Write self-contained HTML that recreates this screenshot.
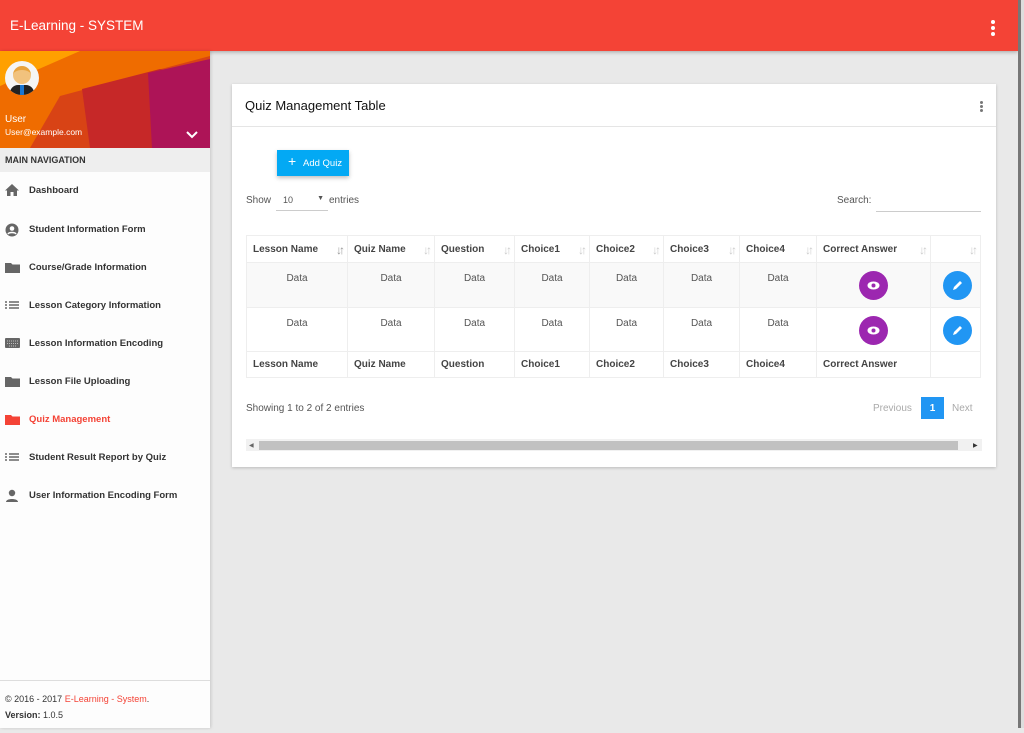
<!DOCTYPE html>
<html><head><meta charset="utf-8"><style>
*{box-sizing:border-box;margin:0;padding:0}
body{width:1024px;height:728px;overflow:hidden;background:#e9e9e9;font-family:"Liberation Sans",sans-serif;position:relative}
.hdr{position:absolute;left:0;top:0;width:1018px;height:51px;background:#f44336;box-shadow:0 1px 4px rgba(0,0,0,.3)}
.hdr .t{position:absolute;left:10px;top:18px;color:#fff;font-size:13.5px}
.dots{position:absolute;width:4px}
.dots i{display:block;width:4px;height:4px;border-radius:50%;background:#fff;margin-bottom:2px}
.rb{position:absolute;left:1018px;top:0;width:3px;height:728px;background:#777}
.rb2{position:absolute;left:1021px;top:0;width:3px;height:728px;background:#ddd}
.rb3{position:absolute;left:1018px;top:0;width:3px;height:51px;background:#c0392b}
.side{position:absolute;left:0;top:51px;width:210px;height:677px;background:#fdfdfd;box-shadow:1px 0 3px rgba(0,0,0,.15)}
.ban{height:97px;position:relative;overflow:hidden;background:#e65100}
.nav-l{height:24px;background:#eee;font-size:9px;font-weight:bold;color:#333;padding:7px 5px}
.it{position:absolute;left:0;height:20px;width:210px;font-size:9.5px;font-weight:bold;color:#333}
.it span{position:absolute;left:29px;top:5px}
.it svg{position:absolute;left:5px;top:4px}
.foot{position:absolute;left:0;top:629px;width:210px;border-top:1px solid #ddd;padding:10px 5px;font-size:9px;color:#333;line-height:16px}
.card{position:absolute;left:232px;top:84px;width:764px;height:383px;background:#fff;box-shadow:0 1px 3px rgba(0,0,0,.2)}
.card .ti{position:absolute;left:13px;top:14px;font-size:13px;color:#111}
.card .hl{position:absolute;left:0;top:42px;width:764px;border-top:1px solid #e5e5e5}
.btn{position:absolute;left:45px;top:66px;width:72px;height:26px;background:#03a9f4;color:#fff;font-size:9.5px;box-shadow:0 2px 4px rgba(0,0,0,.25);padding:8px 0 0 11px}
.sm{font-size:10px;color:#555;position:absolute}
table{position:absolute;left:14px;top:151px;border-collapse:collapse;font-size:10px;color:#555}
td,th{border:1px solid #eee;padding:0 6px;text-align:left}
th{height:27px;font-weight:bold;color:#444;position:relative}
th b{position:absolute;right:5px;top:7px;color:#ccc;font-size:12px;letter-spacing:-3px;font-weight:normal}
td.d{text-align:center;vertical-align:top;padding-top:10px}
tr.r1 td{background:#f9f9f9;height:45px}
tr.r2 td{height:44px}
tfoot td{height:26px;font-weight:bold;color:#444}
.c{width:29px;height:29px;border-radius:50%;display:inline-block;margin-top:-1px;position:relative}
</style></head><body>
<div class="hdr"><div class="t">E-Learning - SYSTEM</div><div class="dots" style="left:991px;top:20px"><i></i><i></i><i></i></div></div>
<div class="rb3"></div><div class="rb"></div><div class="rb2"></div>
<div class="side">
 <div class="ban">
  <svg width="210" height="97" style="position:absolute;left:0;top:0">
   <rect width="210" height="97" fill="#ef6c00"/>
   <polygon points="0,0 80,0 0,35" fill="#ffa000"/>
   <polygon points="30,97 60,45 210,5 210,97" fill="#d84315"/>
   <polygon points="90,97 82,38 160,18 210,28 210,97" fill="#c62828"/>
   <polygon points="152,97 148,22 210,8 210,97" fill="#ad1457"/>
  </svg>
  <div style="position:absolute;left:5px;top:10px;width:34px;height:34px;border-radius:50%;background:#f5f5f5;overflow:hidden">
   <div style="position:absolute;left:8px;top:5px;width:18px;height:18px;border-radius:50%;background:#f1c27d;border-top:4px solid #e8a33d"></div>
   <div style="position:absolute;left:5px;top:24px;width:24px;height:14px;border-radius:8px 8px 0 0;background:#222"></div>
   <div style="position:absolute;left:15px;top:24px;width:4px;height:10px;background:#1976d2"></div>
  </div>
  <div style="position:absolute;left:5px;top:63px;color:#fff;font-size:10px">User</div>
  <div style="position:absolute;left:5px;top:76px;color:#fff;font-size:8.5px">User@example.com</div>
  <svg width="12" height="8" style="position:absolute;left:186px;top:80px"><path d="M1 1l5 5 5-5" stroke="#fff" stroke-width="2" fill="none"/></svg>
 </div>
 <div class="nav-l">MAIN NAVIGATION</div>
 <div class="it" style="top:129px"><svg width="14" height="13"><path d="M5.5 12V8h3v4h3.5V6.5h2L7 0 0 6.5h2V12z" fill="#666"/></svg><span>Dashboard</span></div>
 <div class="it" style="top:168px"><svg width="14" height="14"><circle cx="7" cy="7" r="6.5" fill="#666"/><circle cx="7" cy="5.5" r="2.3" fill="#fff"/><path d="M3 11c1-2 7-2 8 0" stroke="#fff" stroke-width="1.5" fill="none"/></svg><span>Student Information Form</span></div>
 <div class="it" style="top:206px"><svg width="15" height="13"><path d="M0 2h6l1.5 1.5H15V12H0z" fill="#666"/></svg><span>Course/Grade Information</span></div>
 <div class="it" style="top:244px"><svg width="14" height="12"><path d="M0 3h2M4 3h10M0 6h2M4 6h10M0 9h2M4 9h10" stroke="#666" stroke-width="1.4"/></svg><span>Lesson Category Information</span></div>
 <div class="it" style="top:282px"><svg width="15" height="12"><rect x="0" y="1" width="15" height="10" rx="1" fill="#666"/><path d="M2 4h11M2 6.5h11M4 9h7" stroke="#ddd" stroke-width=".8" stroke-dasharray="1 1"/></svg><span>Lesson Information Encoding</span></div>
 <div class="it" style="top:320px"><svg width="15" height="13"><path d="M0 2h6l1.5 1.5H15V12H0z" fill="#666"/></svg><span>Lesson File Uploading</span></div>
 <div class="it" style="top:358px;color:#f44336"><svg width="15" height="13"><path d="M0 2h6l1.5 1.5H15V12H0z" fill="#f44336"/></svg><span>Quiz Management</span></div>
 <div class="it" style="top:396px"><svg width="14" height="12"><path d="M0 3h2M4 3h10M0 6h2M4 6h10M0 9h2M4 9h10" stroke="#666" stroke-width="1.4"/></svg><span>Student Result Report by Quiz</span></div>
 <div class="it" style="top:434px"><svg width="14" height="14"><circle cx="7" cy="4" r="3.2" fill="#666"/><path d="M1 13c0-4 12-4 12 0z" fill="#666"/></svg><span>User Information Encoding Form</span></div>
 <div class="foot">© 2016 - 2017 <span style="color:#f44336">E-Learning - System</span>.<br><b>Version:</b> 1.0.5</div>
</div>
<div class="card">
 <div class="ti">Quiz Management Table</div>
 <div class="dots" style="left:748px;top:17px;width:3px"><i style="width:3px;height:3px;background:#777;margin-bottom:1px"></i><i style="width:3px;height:3px;background:#777;margin-bottom:1px"></i><i style="width:3px;height:3px;background:#777"></i></div>
 <div class="hl"></div>
 <div class="btn"><span style="font-size:14px;position:absolute;left:11px;top:3px">+</span><span style="margin-left:15px">Add Quiz</span></div>
 <div class="sm" style="left:14px;top:111px">Show</div>
 <div class="sm" style="left:44px;top:108px;width:52px;height:19px;border-bottom:1px solid #ccc;font-size:9px;padding:3px 0 0 7px">10<span style="position:absolute;right:4px;top:3px;font-size:7px">▼</span></div>
 <div class="sm" style="left:97px;top:111px">entries</div>
 <div class="sm" style="left:605px;top:111px">Search:</div>
 <div style="position:absolute;left:644px;top:127px;width:105px;border-bottom:1px solid #ccc"></div>
 <table>
  <thead><tr>
   <th style="width:101px">Lesson Name<b style="color:#999">↓↑</b></th><th style="width:87px">Quiz Name<b>↓↑</b></th><th style="width:80px">Question<b>↓↑</b></th><th style="width:75px">Choice1<b>↓↑</b></th><th style="width:74px">Choice2<b>↓↑</b></th><th style="width:76px">Choice3<b>↓↑</b></th><th style="width:77px">Choice4<b>↓↑</b></th><th style="width:114px">Correct Answer<b>↓↑</b></th><th style="width:50px"><b>↓↑</b></th>
  </tr></thead>
  <tbody>
   <tr class="r1"><td class="d">Data</td><td class="d">Data</td><td class="d">Data</td><td class="d">Data</td><td class="d">Data</td><td class="d">Data</td><td class="d">Data</td><td class="d" style="padding-top:9px"><span class="c" style="background:#9c27b0"><svg width="29" height="29" style="position:absolute;left:0;top:0"><ellipse cx="14.5" cy="14.5" rx="6" ry="4" fill="#fff"/><circle cx="14.5" cy="14.5" r="2" fill="#9c27b0"/></svg></span></td><td class="d" style="padding-top:9px;padding-left:10px"><span class="c" style="background:#2196f3"><svg width="29" height="29" style="position:absolute;left:0;top:0"><path d="M10 19l1-3 6-6 2 2-6 6z" fill="#fff"/></svg></span></td></tr>
   <tr class="r2"><td class="d">Data</td><td class="d">Data</td><td class="d">Data</td><td class="d">Data</td><td class="d">Data</td><td class="d">Data</td><td class="d">Data</td><td class="d" style="padding-top:9px"><span class="c" style="background:#9c27b0"><svg width="29" height="29" style="position:absolute;left:0;top:0"><ellipse cx="14.5" cy="14.5" rx="6" ry="4" fill="#fff"/><circle cx="14.5" cy="14.5" r="2" fill="#9c27b0"/></svg></span></td><td class="d" style="padding-top:9px;padding-left:10px"><span class="c" style="background:#2196f3"><svg width="29" height="29" style="position:absolute;left:0;top:0"><path d="M10 19l1-3 6-6 2 2-6 6z" fill="#fff"/></svg></span></td></tr>
  </tbody>
  <tfoot><tr><td>Lesson Name</td><td>Quiz Name</td><td>Question</td><td>Choice1</td><td>Choice2</td><td>Choice3</td><td>Choice4</td><td>Correct Answer</td><td></td></tr></tfoot>
 </table>
 <div class="sm" style="left:14px;top:319px">Showing 1 to 2 of 2 entries</div>
 <div class="sm" style="left:641px;top:319px;color:#aaa">Previous</div>
 <div style="position:absolute;left:689px;top:313px;width:23px;height:22px;background:#2196f3;color:#fff;font-size:10px;font-weight:bold;text-align:center;padding-top:6px">1</div>
 <div class="sm" style="left:720px;top:319px;color:#aaa">Next</div>
 <div style="position:absolute;left:14px;top:355px;width:736px;height:12px;background:#f1f1f1"></div>
 <div style="position:absolute;left:27px;top:357px;width:699px;height:9px;background:#c1c1c1"></div>
 <div style="position:absolute;left:17px;top:358px;font-size:6px;color:#666">◀</div>
 <div style="position:absolute;left:741px;top:358px;font-size:6px;color:#333">▶</div>
</div>
</body></html>
